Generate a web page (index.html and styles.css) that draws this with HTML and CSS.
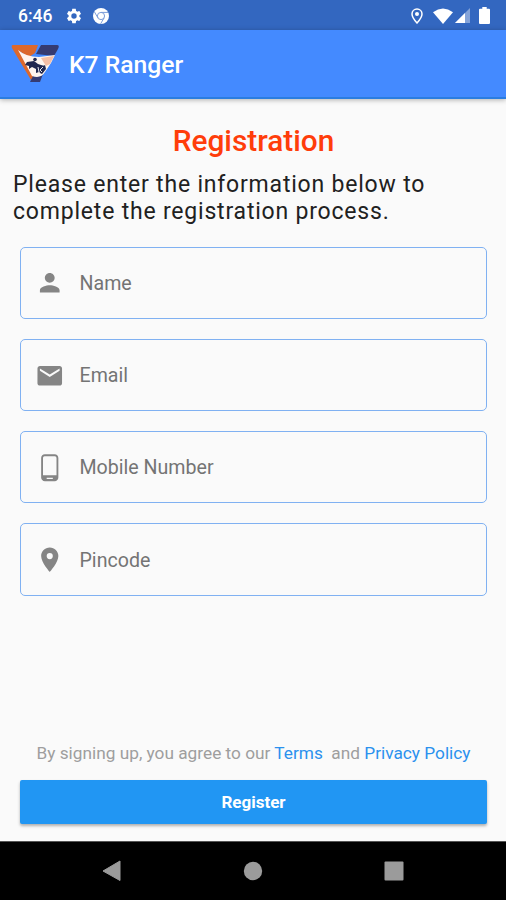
FILE: index.html
```html
<!DOCTYPE html>
<html lang="en">
<head>
<meta charset="utf-8">
<title>K7 Ranger</title>
<link rel="stylesheet" href="styles.css">
</head>
<body>
<div class="status">
  <span class="time">6:46</span>
  <svg class="gear" width="18" height="18" viewBox="0 0 24 24"><path d="M19.14 12.94c.04-.3.06-.61.06-.94s-.02-.64-.07-.94l2.03-1.58c.18-.14.23-.41.12-.61l-1.92-3.32c-.12-.22-.37-.29-.59-.22l-2.39.96c-.5-.38-1.03-.7-1.62-.94l-.36-2.54c-.04-.24-.24-.41-.48-.41h-3.84c-.24 0-.43.17-.47.41l-.36 2.54c-.59.24-1.13.57-1.62.94l-2.39-.96c-.22-.08-.47 0-.59.22L2.74 8.87c-.12.21-.08.47.12.61l2.03 1.58c-.05.3-.09.63-.09.94s.02.64.07.94l-2.03 1.58c-.18.14-.23.41-.12.61l1.92 3.32c.12.22.37.29.59.22l2.39-.96c.5.38 1.03.7 1.62.94l.36 2.54c.05.24.24.41.48.41h3.84c.24 0 .44-.17.47-.41l.36-2.54c.59-.24 1.13-.56 1.62-.94l2.39.96c.22.08.47 0 .59-.22l1.92-3.32c.12-.22.07-.47-.12-.61l-2.01-1.58zM12 15.6A3.6 3.6 0 1 1 12 8.4a3.6 3.6 0 0 1 0 7.2z"/></svg>
  <svg class="chrome" width="16" height="16" viewBox="0 0 16 16"><circle cx="8" cy="8" r="8"/><g fill="none" stroke="#7c9dd8" stroke-width="1"><circle cx="8" cy="8" r="3.6"/><path d="M8 4.400h7M4.900 9.800 1.400 3.800M11.100 9.800 7.600 15.900"/></g></svg>
  <span class="grow"></span>
  <svg class="loc" width="12" height="16" viewBox="0 0 12 16"><path d="M6 1C3.200 1 1 3.200 1 6c0 3.500 5 9 5 9s5-5.500 5-9c0-2.800-2.200-5-5-5z" fill="none" stroke="#fff" stroke-width="1.500"/><circle cx="6" cy="6" r="2"/></svg>
  <svg class="wifi" width="20" height="16" viewBox="0 0 20 16"><path d="M0 4.200Q10-3.200 20 4.200L10 16z"/></svg>
  <svg class="signal" width="15" height="15" viewBox="0 0 15 15"><path d="M15 0v15H0z" opacity=".4"/><path d="M10 5v10H0z"/></svg>
  <svg class="battery" width="11" height="17" viewBox="0 0 11 17"><path d="M3.300 0h4.400v1.700H10q1 0 1 1V16q0 1-1 1H1q-1 0-1-1V2.700q0-1 1-1h2.300z"/></svg>
</div>
<header class="appbar">
  <svg class="logo" width="50" height="40" viewBox="0 0 50 40">
    <path d="M2 1H27L24 9 18 13 8 7 24 33 20 36 1 4Q0 1 2 1Z" fill="#dc682c"/>
    <path d="M30 1H46Q49 1 47 5L43 12 25 10Z" fill="#353b72"/>
    <path d="M22 32 32 30 29 38H19Z" fill="#353b72"/>
    <path d="M7 6Q15 13 28 13 36 12 44 11L40 19 34 28Q30 35 21 32Z" fill="#fff5ee"/>
    <path d="M30 14 43 12 39 20 35 22Z" fill="#f6bfa5"/>
    <circle cx="24" cy="15.500" r="1.800" fill="#22284f"/>
    <path d="M16 18l7-1 4 3 3 1 4 1-1 3-3 4-2-1-3 1 0-4-4-2-3 2 0-3-4-1z" fill="#22284f"/>
    <path d="M31 23l3-2 1 4-4 5-2-1z" fill="#22284f"/>
    <path d="m27 23 1 5m4-5-3 3 2 2" fill="none" stroke="#fff" stroke-width=".9"/>
  </svg>
  <h1 class="title">K7 Ranger</h1>
</header>
<main class="content">
  <h2 class="heading">Registration</h2>
  <p class="intro">Please enter the information below to<br>complete the registration process.</p>
  <form class="fields">
    <div class="field"><svg class="icon" viewBox="0 0 24 24"><path d="M12 12c2.210 0 4-1.790 4-4s-1.790-4-4-4-4 1.790-4 4 1.790 4 4 4zm0 2c-2.670 0-8 1.340-8 4v2h16v-2c0-2.660-5.330-4-8-4z"/></svg><span>Name</span></div>
    <div class="field"><svg class="icon" viewBox="0 0 24 24"><path d="M20 4H4c-1.100 0-1.990.9-1.990 2L2 18c0 1.100.9 2 2 2h16c1.100 0 2-.9 2-2V6c0-1.100-.9-2-2-2zm0 4-8 5-8-5V6l8 5 8-5v2z"/></svg><span>Email</span></div>
    <div class="field"><svg class="icon" viewBox="0 0 24 24"><path fill-rule="evenodd" d="M16 1H8C6.340 1 5 2.340 5 4v16c0 1.660 1.340 3 3 3h8c1.660 0 3-1.340 3-3V4c0-1.660-1.340-3-3-3zM6.500 4v14.200h11V4q0-1.300-1.300-1.300H7.800Q6.500 2.700 6.500 4zM9.500 20.200v1h5v-1z"/></svg><span>Mobile Number</span></div>
    <div class="field"><svg class="icon" viewBox="0 0 24 24"><path d="M12 2C8.130 2 5 5.130 5 9c0 5.250 7 13 7 13s7-7.750 7-13c0-3.870-3.130-7-7-7zm0 9.500a2.500 2.500 0 0 1 0-5 2.500 2.500 0 0 1 0 5z"/></svg><span>Pincode</span></div>
  </form>
  <p class="legal">By signing up, you agree to our <a>Terms</a>&nbsp; and <a>Privacy Policy</a></p>
  <button class="register">Register</button>
</main>
<nav class="navbar">
  <svg width="20" height="22" viewBox="0 0 20 22"><path d="M18 1v19.500L1 11z" stroke="#9b9b9b" stroke-linejoin="round"/></svg>
  <svg width="20" height="20" viewBox="0 0 20 20"><circle cx="10" cy="10" r="9.200"/></svg>
  <svg width="20" height="20" viewBox="0 0 20 20"><rect x=".5" y=".5" width="19" height="19" rx="1"/></svg>
</nav>
</body>
</html>
```
FILE: styles.css
```css
* { box-sizing: border-box; }
body {
  margin: 0;
  height: 900px;
  display: flex;
  flex-direction: column;
  background: #fafafa;
  font-family: Roboto, "Liberation Sans", sans-serif;
  overflow: hidden;
}
h1, h2, p { margin: 0; }
.status {
  height: 30px;
  display: flex;
  align-items: center;
  padding: 1px 16px 0 18px;
  background: #3367c0;
  color: #fff;
  fill: #fff;
}
.time { font-size: 17.5px; font-weight: 500; width: 47px; }
.chrome { margin-left: 10px; }
.grow { flex: 1; }
.loc { margin-right: 1px; }
.wifi { margin-left: 9px; }
.signal { margin-left: 2px; }
.battery { margin-left: 9px; }
.appbar {
  height: 69px;
  display: flex;
  align-items: center;
  padding: 0 11px;
  background: #448aff;
  border-bottom: 2px solid #2b7de0;
  box-shadow: 0 1px 5px rgba(0, 0, 0, .3);
  color: #fff;
}
.logo { margin-top: 1px; }
.title { margin-left: 8px; margin-top: 2px; font-size: 24.7px; font-weight: 500; }
.content { flex: 1; display: flex; flex-direction: column; padding: 0 19px 17px 20px; }
.heading {
  margin-top: 25px;
  line-height: 34px;
  text-align: center;
  color: #ff3d0a;
  font-size: 29.8px;
  font-weight: 500;
}
.intro {
  margin: 13px 0 0 -7px;
  white-space: nowrap;
  font-size: 23px;
  line-height: 27.3px;
  letter-spacing: .8px;
  color: #212121;
}
.fields { display: flex; flex-direction: column; gap: 20px; margin-top: 21px; }
.field {
  height: 72.3px;
  display: flex;
  align-items: center;
  padding: 1px 0 0 14px;
  border: 1.5px solid #80b1f2;
  border-radius: 5px;
  color: #747474;
  font-size: 19.6px;
}
.icon { width: 29.5px; height: 29.5px; margin-right: 15px; fill: #858585; }
.legal { margin-top: auto; text-align: center; white-space: nowrap; font-size: 17.25px; line-height: 22px; color: #9e9e9e; }
.legal a { color: #2b91ee; }
.register {
  height: 44px;
  margin-top: 16px;
  border: 0;
  border-radius: 2px;
  background: #2196f3;
  box-shadow: 0 2px 3px rgba(0, 0, 0, .3);
  color: #fff;
  font: 700 17px Roboto, sans-serif;
}
.navbar {
  height: 59px;
  display: flex;
  align-items: center;
  justify-content: space-between;
  padding: 0 102px 0 102px;
  background: #000;
  border-top: 1px solid #555;
  fill: #9b9b9b;
}
```
